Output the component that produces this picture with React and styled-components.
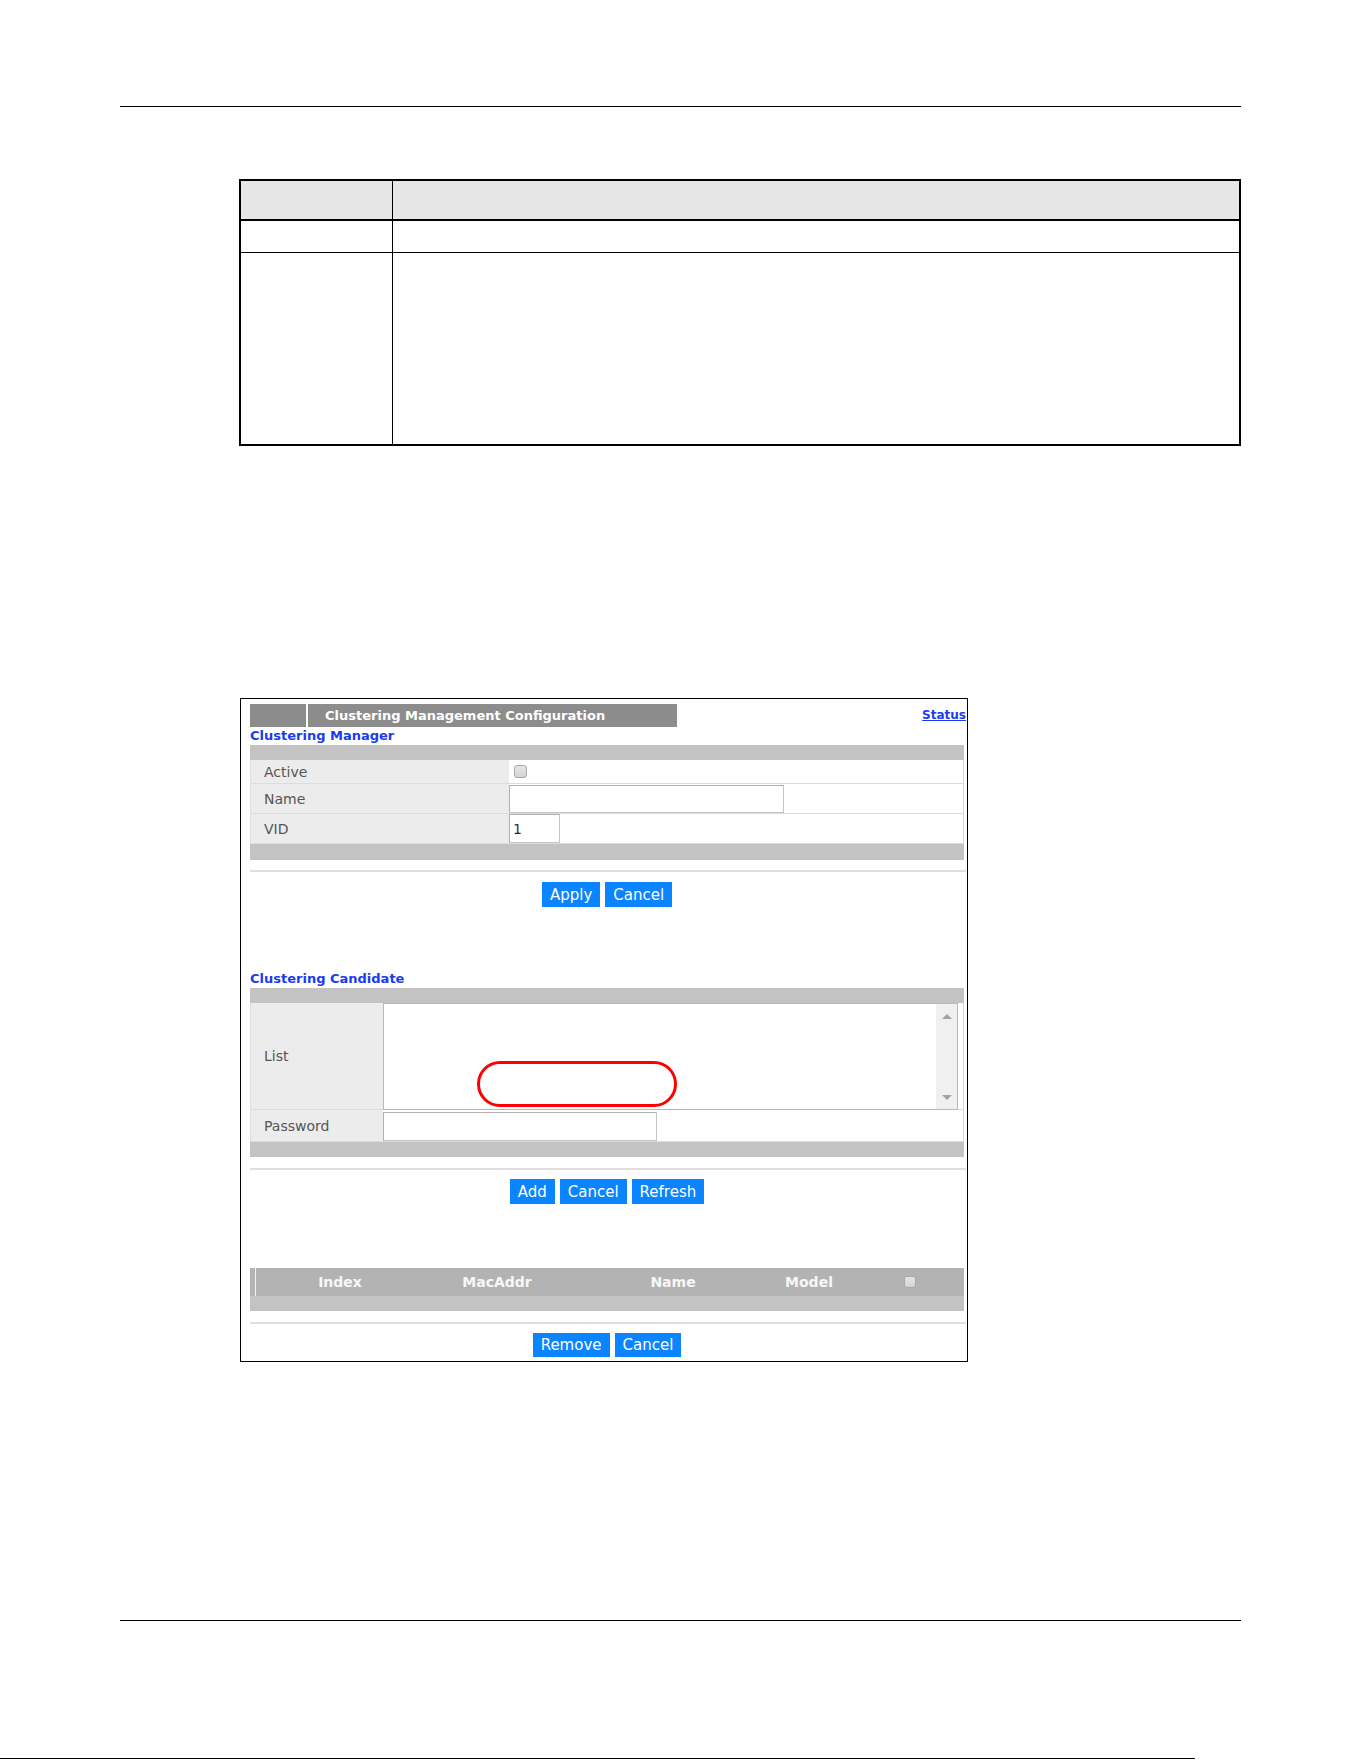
import React from "react";
import styled, { createGlobalStyle } from "styled-components";

const GlobalStyle = createGlobalStyle`
  html, body { margin: 0; padding: 0; background: #fff; }
  body { font-family: "DejaVu Sans", "Liberation Sans", sans-serif; }
  * { box-sizing: border-box; }
`;

const Page = styled.div`
  width: 1361px;
  min-height: 1761px;
  display: flex;
  flex-direction: column;
  align-items: flex-start;
`;

const Rule = styled.div`
  margin-top: ${(p) => p.$top}px;
  margin-left: ${(p) => p.$left}px;
  width: ${(p) => p.$width}px;
  border-top: 1px solid #000;
`;

/* ---------- reference table of the manual page ---------- */
const DocTable = styled.table`
  margin-top: 72px;
  margin-left: 239px;
  width: 1002px;
  border-collapse: collapse;
  border: 2px solid #000;
  td, th {
    border: 1px solid #000;
    padding: 0;
  }
`;

const DocHeadRow = styled.tr`
  height: 40px;
  background: #e6e6e6;
  th { border-bottom: 2px solid #000; }
`;

const DocRow = styled.tr`
  height: ${(p) => p.$h}px;
`;

const DocKeyCell = styled.td`
  width: 152px;
`;

/* ---------- web configurator panel ---------- */
const Panel = styled.div`
  margin-top: 252px;
  margin-left: 240px;
  width: 728px;
  border: 1px solid #000;
  padding: 5px 3px 4px 9px;
  display: flex;
  flex-direction: column;
  font-family: "DejaVu Sans", "Liberation Sans", sans-serif;
`;

const TitleRow = styled.div`
  display: flex;
  justify-content: space-between;
  align-items: flex-start;
`;

const TitleBar = styled.div`
  display: flex;
  gap: 2px;
  height: 23px;
`;

const TitleStub = styled.div`
  width: 56px;
  background: #8c8c8c;
`;

const TitleText = styled.div`
  width: 369px;
  background: #8c8c8c;
  color: #fff;
  font-weight: bold;
  font-size: 13px;
  line-height: 23px;
  padding-left: 17px;
  white-space: nowrap;
`;

const StatusLink = styled.a`
  color: #1a3cf0;
  font-weight: bold;
  font-size: 12px;
  text-decoration: underline;
  margin-top: 4px;
  margin-right: -2px;
  cursor: pointer;
`;

const Heading = styled.div`
  color: #1a3cf0;
  font-weight: bold;
  font-size: 13px;
  line-height: 18px;
  height: 18px;
  margin-top: ${(p) => p.$gap || 0}px;
  white-space: nowrap;
`;

const GrayBar = styled.div`
  height: ${(p) => p.$h}px;
  background: #c3c3c3;
`;

const FormGrid = styled.div`
  display: grid;
  grid-template-columns: ${(p) => p.$label}px 1fr;
  width: 714px;
`;

const LabelCell = styled.div`
  background: #ececec;
  color: #555;
  font-size: 14px;
  height: ${(p) => p.$h}px;
  display: flex;
  align-items: center;
  padding-left: 13px;
  border-bottom: 1px solid #dcdcdc;
  border-left: 1px solid #e2e2e2;
`;

const ValueCell = styled.div`
  background: #fff;
  height: ${(p) => p.$h}px;
  display: flex;
  align-items: ${(p) => (p.$top ? "flex-start" : "center")};
  padding-left: ${(p) => p.$pad || 0}px;
  padding-top: ${(p) => p.$padTop || 0}px;
  border-bottom: 1px solid #dcdcdc;
  border-right: 1px solid #dcdcdc;
  position: relative;
`;

const CheckBox = styled.span`
  display: inline-block;
  width: ${(p) => p.$size || 13}px;
  height: ${(p) => p.$size || 13}px;
  border-radius: 3px;
  border: 1px solid #a8a8a8;
  background: linear-gradient(#e6e6e6, #d4d4d4);
`;

const TextField = styled.div`
  width: ${(p) => p.$w}px;
  height: ${(p) => p.$h}px;
  border: 1px solid #c4c4c4;
  border-top-color: #b0b0b0;
  border-left-color: #b0b0b0;
  background: #fff;
  color: #3b2a38;
  font-size: 14px;
  display: flex;
  align-items: center;
  padding-left: 3px;
`;

const ListBox = styled.div`
  width: 575px;
  height: 107px;
  border: 1px solid #b8b8b8;
  background: #fff;
  display: flex;
  justify-content: flex-end;
`;

const ScrollTrack = styled.div`
  width: 21px;
  background: #f0f0f0;
  display: flex;
  flex-direction: column;
  justify-content: space-between;
  align-items: center;
  padding: 10px 0 9px;
`;

const Arrow = styled.span`
  width: 0;
  height: 0;
  border-left: 5px solid transparent;
  border-right: 5px solid transparent;
  ${(p) =>
    p.$down
      ? "border-top: 5px solid #a3a3a3;"
      : "border-bottom: 5px solid #a3a3a3;"}
`;

/* red callout ring drawn over the candidate list */
const Callout = styled.div`
  position: absolute;
  left: 94px;
  top: 58px;
  width: 200px;
  height: 46px;
  border: 3px solid #ff0000;
  border-radius: 23px;
  pointer-events: none;
`;

const Separator = styled.div`
  height: 2px;
  background: #e0e0e0;
  margin-top: ${(p) => p.$top}px;
  margin-right: -2px;
`;

const ButtonRow = styled.div`
  display: flex;
  justify-content: center;
  gap: 5px;
  margin-top: ${(p) => p.$top}px;
`;

const Button = styled.button`
  height: ${(p) => p.$h || 25}px;
  padding: 0 8px;
  border: none;
  background: #0a84ff;
  color: #fff;
  font-family: "DejaVu Sans", "Liberation Sans", sans-serif;
  font-size: 15px;
  cursor: pointer;
`;

const ListHeader = styled.div`
  margin-top: 64px;
  display: grid;
  grid-template-columns: 6px 168px 146px 206px 66px 1fr;
  height: 28px;
  background: #b3b3b3;
  width: 714px;
`;

const HeadCell = styled.div`
  display: flex;
  align-items: center;
  justify-content: center;
  padding-left: ${(p) => p.$pad || 0}px;
  color: #f7f7f7;
  font-weight: bold;
  font-size: 14px;
  border-right: ${(p) => (p.$edge ? "1px solid #f2f2f2" : "none")};
`;

const settings = [
  { label: "Active", h: 24, kind: "check" },
  { label: "Name", h: 30, kind: "name" },
  { label: "VID", h: 30, kind: "vid" },
];

export default function App() {
  return (
    <Page>
      <GlobalStyle />
      <Rule $top={106} $left={120} $width={1121} />

      <DocTable>
        <tbody>
          <DocHeadRow>
            <th style={{ width: 152 }} />
            <th />
          </DocHeadRow>
          <DocRow $h={32}>
            <DocKeyCell />
            <td />
          </DocRow>
          <DocRow $h={193}>
            <DocKeyCell />
            <td />
          </DocRow>
        </tbody>
      </DocTable>

      <Panel>
        <TitleRow>
          <TitleBar>
            <TitleStub />
            <TitleText>Clustering Management Configuration</TitleText>
          </TitleBar>
          <StatusLink>Status</StatusLink>
        </TitleRow>

        <Heading>Clustering Manager</Heading>
        <GrayBar $h={15} />
        <FormGrid $label={259}>
          {settings.map((s) => (
            <React.Fragment key={s.label}>
              <LabelCell $h={s.h}>{s.label}</LabelCell>
              {s.kind === "check" && (
                <ValueCell $h={s.h} $pad={5}>
                  <CheckBox />
                </ValueCell>
              )}
              {s.kind === "name" && (
                <ValueCell $h={s.h}>
                  <TextField $w={275} $h={28} />
                </ValueCell>
              )}
              {s.kind === "vid" && (
                <ValueCell $h={s.h}>
                  <TextField $w={51} $h={29}>1</TextField>
                </ValueCell>
              )}
            </React.Fragment>
          ))}
        </FormGrid>
        <GrayBar $h={16} />
        <Separator $top={10} />
        <ButtonRow $top={10}>
          <Button>Apply</Button>
          <Button>Cancel</Button>
        </ButtonRow>

        <Heading $gap={63}>Clustering Candidate</Heading>
        <GrayBar $h={15} />
        <FormGrid $label={133}>
          <LabelCell $h={107}>List</LabelCell>
          <ValueCell $h={107} $top>
            <ListBox>
              <ScrollTrack>
                <Arrow />
                <Arrow $down />
              </ScrollTrack>
            </ListBox>
            <Callout />
          </ValueCell>
          <LabelCell $h={32}>Password</LabelCell>
          <ValueCell $h={32} $top $padTop={2}>
            <TextField $w={274} $h={29} />
          </ValueCell>
        </FormGrid>
        <GrayBar $h={15} />
        <Separator $top={11} />
        <ButtonRow $top={9}>
          <Button>Add</Button>
          <Button>Cancel</Button>
          <Button>Refresh</Button>
        </ButtonRow>

        <ListHeader>
          <HeadCell $edge />
          <HeadCell>Index</HeadCell>
          <HeadCell>MacAddr</HeadCell>
          <HeadCell>Name</HeadCell>
          <HeadCell>Model</HeadCell>
          <HeadCell $pad={14}>
            <CheckBox $size={12} />
          </HeadCell>
        </ListHeader>
        <GrayBar $h={15} />
        <Separator $top={11} />
        <ButtonRow $top={9}>
          <Button $h={24}>Remove</Button>
          <Button $h={24}>Cancel</Button>
        </ButtonRow>
      </Panel>

      <Rule $top={258} $left={120} $width={1121} />
      <Rule $top={137} $left={0} $width={1195} />
    </Page>
  );
}
